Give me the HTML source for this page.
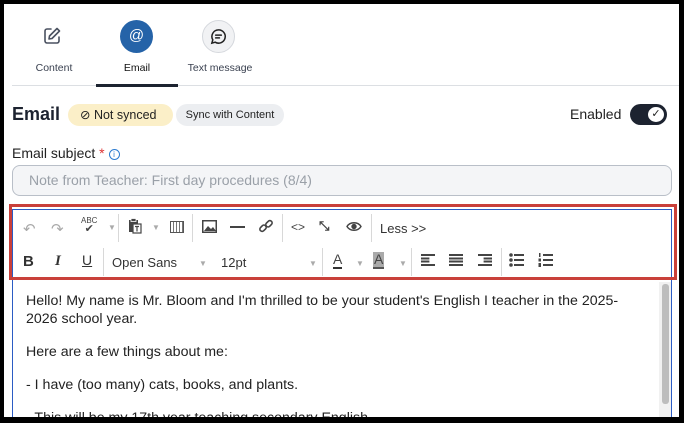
<!DOCTYPE html>
<html><head><meta charset="utf-8"><style>
*{margin:0;padding:0;box-sizing:border-box}
body{width:684px;height:423px;overflow:hidden;background:#000;position:relative;font-family:"Liberation Sans",sans-serif}
#pg{position:absolute;left:4px;top:4px;width:675px;height:413px;background:#fff;overflow:hidden}
.a{position:absolute}
.tab{font-size:10.5px;color:#3a4150;text-align:center}
.tb{position:absolute;font-size:13px;color:#444}
.sep{position:absolute;width:1px;background:#d8d8d8}
.txt{font-size:14.2px;color:#222;line-height:18px}
</style></head><body>
<div id="pg">
<svg class="a" style="left:38px;top:22px" width="20" height="20" viewBox="0 0 20 20" fill="none" stroke="#4a5160" stroke-width="1.6" stroke-linecap="round" stroke-linejoin="round"><path d="M9 3H5a2 2 0 0 0-2 2v10a2 2 0 0 0 2 2h10a2 2 0 0 0 2-2v-4"/><path d="M15 2.5l2.5 2.5L10 12.5 7 13l.5-3z"/></svg>
<div class="a tab" style="left:20px;top:58px;width:60px">Content</div>
<div class="a" style="left:116px;top:16px;width:33px;height:33px;border-radius:50%;background:#2563a8;color:#fff;font-size:15px;text-align:center;line-height:32px">@</div>
<div class="a tab" style="left:104px;top:58px;width:58px;color:#111">Email</div>
<div class="a" style="left:198px;top:16px;width:33px;height:33px;border-radius:50%;background:#f1f2f4;border:1px solid #d5d8dd"></div>
<svg class="a" style="left:205px;top:23px" width="19" height="19" viewBox="0 0 20 20" fill="none" stroke="#222" stroke-width="1.6" stroke-linecap="round"><path d="M10 3a7 7 0 1 1-3.5 13L3 17l1-3.5A7 7 0 0 1 10 3z"/><path d="M7 8.5h6M7 11.5h4"/></svg>
<div class="a tab" style="left:180px;top:58px;width:72px">Text message</div>
<div class="a" style="left:8px;top:81px;width:667px;height:1px;background:#dcdfe3"></div>
<div class="a" style="left:92px;top:80px;width:82px;height:3px;background:#1d2330"></div>
<div class="a" style="left:8px;top:100px;font-size:18px;font-weight:bold;color:#1d2330">Email</div>
<div class="a" style="left:64px;top:100px;width:105px;height:22px;border-radius:11px;background:#fbefc8;font-size:12.5px;color:#222;line-height:22px;padding-left:12px">⊘ Not synced</div>
<div class="a" style="left:172px;top:100px;width:108px;height:22px;border-radius:11px;background:#eceef1;font-size:11px;color:#222;line-height:22px;text-align:center">Sync with Content</div>
<div class="a" style="left:566px;top:102px;font-size:14px;color:#222">Enabled</div>
<div class="a" style="left:626px;top:100px;width:37px;height:21px;border-radius:11px;background:#1d2330"></div>
<div class="a" style="left:642px;top:101px;width:20px;height:19px;border-radius:50%;background:#fff;border:2px solid #1d2330;font-size:11px;text-align:center;line-height:15px;color:#222">✓</div>
<div class="a" style="left:8px;top:141px;font-size:14px;color:#222">Email subject <span style="color:#d33">*</span> <span style="display:inline-block;width:11px;height:11px;border:1.3px solid #2b7bd0;border-radius:50%;font-size:8px;color:#2b7bd0;text-align:center;line-height:9px;vertical-align:1px">i</span></div>
<div class="a" style="left:8px;top:161px;width:660px;height:31px;border:1px solid #b9bfc8;border-radius:8px;background:#f4f5f7;font-size:14px;color:#9aa0a8;line-height:29px;padding-left:16px">Note from Teacher: First day procedures (8/4)</div>
<div class="a" style="left:8px;top:205px;width:660px;height:210px;border:1px solid #2b5cc4;background:#fff"></div>
<div class="a" style="left:9px;top:206px;width:658px;height:69px;background:#fff;border-bottom:1px solid #ccc"></div>
<div class="tb" style="left:19px;top:216px;color:#aaa;font-size:15px">↶</div>
<div class="tb" style="left:47px;top:216px;color:#aaa;font-size:15px">↷</div>
<div class="tb" style="left:77px;top:213px;font-size:8px;line-height:8px;text-align:center">ABC<br><span style="font-size:11px">✔</span></div>
<div class="tb" style="left:104px;top:219px;color:#aaa;font-size:8px">▼</div>
<div class="sep" style="left:114px;top:210px;height:28px"></div>
<svg class="a" style="left:124px;top:214px" width="14" height="16" viewBox="0 0 14 16"><rect x="1" y="2" width="9" height="12" fill="#444"/><rect x="3" y="0.5" width="5" height="3" fill="#444" stroke="#fff" stroke-width="0.8"/><rect x="5" y="6" width="8" height="9" fill="#fff" stroke="#444" stroke-width="1.2"/><path d="M7 8.5h4M9 8.5v5" stroke="#444" stroke-width="1.2"/></svg>
<div class="tb" style="left:148px;top:219px;color:#aaa;font-size:8px">▼</div>
<div class="a" style="left:166px;top:217px;width:14px;height:12px;border:1.5px solid #555;background:repeating-linear-gradient(90deg,#fff 0 2px,#777 2px 3px)"></div>
<div class="sep" style="left:188px;top:210px;height:28px"></div>
<svg class="a" style="left:198px;top:216px" width="15" height="13" viewBox="0 0 15 13"><rect x="0.75" y="0.75" width="13.5" height="11.5" fill="#fff" stroke="#444" stroke-width="1.5"/><path d="M2 11l4-5 3 3 2-2 3 4z" fill="#444"/></svg>
<div class="a" style="left:226px;top:222px;width:15px;height:2px;background:#444"></div>
<svg class="a" style="left:254px;top:214px" width="16" height="16" viewBox="0 0 16 16" fill="none" stroke="#444" stroke-width="1.6"><rect x="1.5" y="8" width="7" height="4.5" rx="2.2" transform="rotate(-45 5 10.2)"/><rect x="7.5" y="3.5" width="7" height="4.5" rx="2.2" transform="rotate(-45 11 5.8)"/></svg>
<div class="sep" style="left:278px;top:210px;height:28px"></div>
<div class="tb" style="left:287px;top:216px;font-size:12px">&lt;&gt;</div>
<div class="tb" style="left:315px;top:214px;font-size:13px;font-weight:bold">⤡</div>
<svg class="a" style="left:342px;top:217px" width="16" height="11" viewBox="0 0 16 11" fill="none" stroke="#444" stroke-width="1.4"><path d="M1 5.5C4 0.5 12 0.5 15 5.5 12 10.5 4 10.5 1 5.5z"/><circle cx="8" cy="5.5" r="2" fill="#444"/></svg>
<div class="sep" style="left:367px;top:210px;height:28px"></div>
<div class="tb" style="left:376px;top:217px;font-size:13px;color:#333">Less &gt;&gt;</div>
<div class="tb" style="left:19px;top:249px;font-size:15px;font-weight:bold;color:#333">B</div>
<div class="tb" style="left:51px;top:249px;font-size:15px;font-style:italic;font-weight:bold;color:#333;font-family:'Liberation Serif',serif">I</div>
<div class="tb" style="left:78px;top:248px;font-size:14px;text-decoration:underline;color:#333">U</div>
<div class="sep" style="left:99px;top:244px;height:28px"></div>
<div class="tb" style="left:108px;top:251px;font-size:13px;color:#333">Open Sans</div>
<div class="tb" style="left:195px;top:255px;color:#aaa;font-size:8px">▼</div>
<div class="tb" style="left:217px;top:251px;font-size:13px;color:#333">12pt</div>
<div class="tb" style="left:305px;top:255px;color:#aaa;font-size:8px">▼</div>
<div class="sep" style="left:318px;top:244px;height:28px"></div>
<div class="tb" style="left:329px;top:248px;font-size:14px;border-bottom:2px solid #333;line-height:15px">A</div>
<div class="tb" style="left:352px;top:255px;color:#aaa;font-size:8px">▼</div>
<div class="tb" style="left:369px;top:248px;font-size:14px;background:#aaa;border-bottom:2px solid #555;line-height:15px;padding:0 1px">A</div>
<div class="tb" style="left:395px;top:255px;color:#aaa;font-size:8px">▼</div>
<div class="sep" style="left:407px;top:244px;height:28px"></div>
<div class="a" style="left:417px;top:250px;width:14px;height:12px;background:repeating-linear-gradient(180deg,#444 0 2px,transparent 2px 3.3px);clip-path:polygon(0 0,100% 0,100% 20%,60% 20%,60% 80%,100% 80%,100% 100%,0 100%)"></div>
<div class="a" style="left:445px;top:250px;width:14px;height:12px;background:repeating-linear-gradient(180deg,#444 0 2px,transparent 2px 3.3px)"></div>
<div class="a" style="left:474px;top:250px;width:14px;height:12px;background:repeating-linear-gradient(180deg,#444 0 2px,transparent 2px 3.3px);clip-path:polygon(0 0,100% 0,100% 100%,0 100%,0 80%,40% 80%,40% 20%,0 20%)"></div>
<div class="sep" style="left:497px;top:244px;height:28px"></div>
<svg class="a" style="left:505px;top:249px" width="15" height="14" viewBox="0 0 15 14" fill="#444"><circle cx="2" cy="2" r="1.8"/><circle cx="2" cy="7" r="1.8"/><circle cx="2" cy="12" r="1.8"/><rect x="5" y="1" width="10" height="2"/><rect x="5" y="6" width="10" height="2"/><rect x="5" y="11" width="10" height="2"/></svg>
<svg class="a" style="left:534px;top:249px" width="15" height="14" viewBox="0 0 15 14" fill="#444"><rect x="1" y="0" width="1.5" height="4"/><rect x="0.5" y="5.5" width="2.5" height="3"/><rect x="0.5" y="10" width="2.5" height="4"/><rect x="5" y="1" width="10" height="2"/><rect x="5" y="6" width="10" height="2"/><rect x="5" y="11" width="10" height="2"/></svg>
<div class="a" style="left:5px;top:200px;width:668px;height:76px;border:3px solid #c9403a"></div>
<div class="a txt" style="left:22px;top:288px;width:620px">Hello! My name is Mr. Bloom and I'm thrilled to be your student's English I teacher in the 2025-2026 school year.</div>
<div class="a txt" style="left:22px;top:339px">Here are a few things about me:</div>
<div class="a txt" style="left:22px;top:372px">- I have (too many) cats, books, and plants.</div>
<div class="a txt" style="left:22px;top:405px">- This will be my 17th year teaching secondary English.</div>
<div class="a" style="left:655px;top:278px;width:12px;height:135px;background:#f1f1f1"></div>
<div class="a" style="left:658px;top:280px;width:7px;height:120px;background:#bdbdbd;border-radius:3px"></div>
</div>
</body></html>
